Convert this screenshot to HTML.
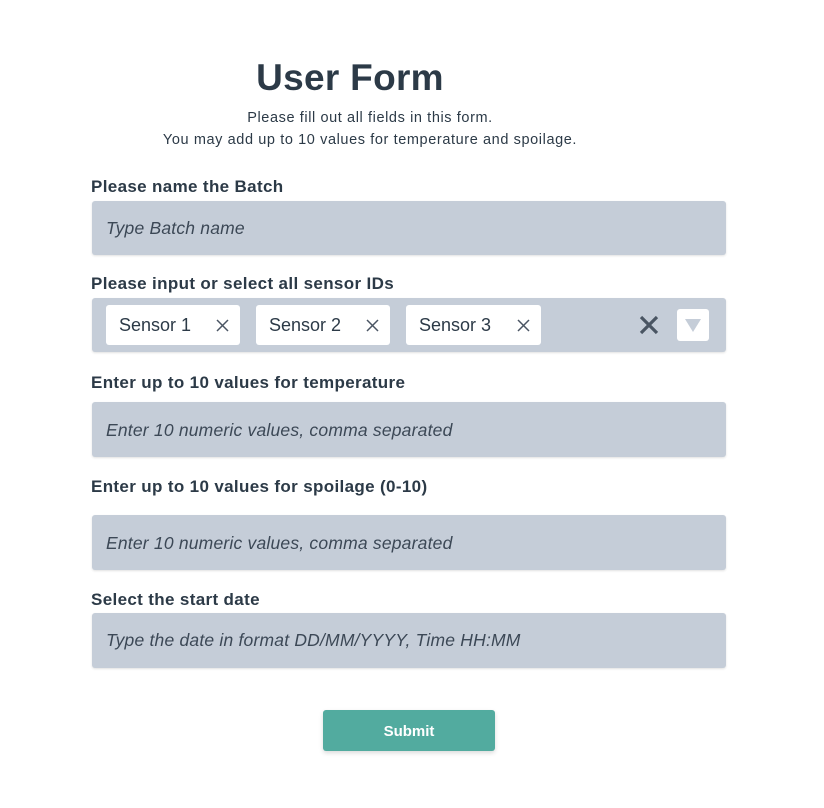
<!DOCTYPE html>
<html><head><style>
body{margin:0;width:824px;height:808px;background:#fff;font-family:"Liberation Sans",sans-serif;color:#2c3a47;position:relative;overflow:hidden}
.a{position:absolute}
.t{left:0;width:700px;text-align:center;top:57px;font-size:37px;font-weight:bold;letter-spacing:0.3px}
.s{left:0;width:740px;text-align:center;font-size:14.5px;letter-spacing:0.6px}
.l{left:91px;font-size:17px;font-weight:bold;letter-spacing:0.35px}
.i{left:92px;width:634px;background:#c5cdd8;border-radius:3px;box-shadow:0 1px 2px rgba(0,0,0,.12)}
.p{position:absolute;left:14px;font-style:italic;font-size:17.5px;color:#3c4856;letter-spacing:0.2px}
.c{top:305px;width:134px;height:40px;background:#fff;border-radius:3px;font-size:18px;line-height:40px;color:#2c3a47}
.c span{position:absolute;left:13px}
.c svg{position:absolute;right:11px;top:14px}
</style></head><body>
<div class="a t">User Form</div>
<div class="a s" style="top:110px">Please fill out all fields in this form.</div>
<div class="a s" style="top:132px">You may add up to 10 values for temperature and spoilage.</div>

<div class="a l" style="top:177px">Please name the Batch</div>
<div class="a i" style="top:201px;height:54px"><div class="p" style="top:17px">Type Batch name</div></div>

<div class="a l" style="top:274px">Please input or select all sensor IDs</div>
<div class="a i" style="top:298px;height:54px"></div>
<div class="a c" style="left:106px"><span>Sensor 1</span><svg width="13" height="13"><path d="M1 1L12 12M12 1L1 12" stroke="#4a5563" stroke-width="1.5"/></svg></div>
<div class="a c" style="left:256px"><span>Sensor 2</span><svg width="13" height="13"><path d="M1 1L12 12M12 1L1 12" stroke="#4a5563" stroke-width="1.5"/></svg></div>
<div class="a c" style="left:406px;width:135px"><span>Sensor 3</span><svg width="13" height="13"><path d="M1 1L12 12M12 1L1 12" stroke="#4a5563" stroke-width="1.5"/></svg></div>
<svg class="a" style="left:639px;top:315px" width="20" height="20"><path d="M2 2L18 18M18 2L2 18" stroke="#4a5563" stroke-width="3.2"/></svg>
<div class="a" style="left:677px;top:309px;width:32px;height:32px;background:#fff;border-radius:3px"></div>
<svg class="a" style="left:685px;top:319px" width="16" height="13"><path d="M0 0H16L8 13Z" fill="#c5cdd8"/></svg>

<div class="a l" style="top:373px">Enter up to 10 values for temperature</div>
<div class="a i" style="top:402px;height:55px"><div class="p" style="top:18px">Enter 10 numeric values, comma separated</div></div>

<div class="a l" style="top:477px">Enter up to 10 values for spoilage (0-10)</div>
<div class="a i" style="top:515px;height:55px"><div class="p" style="top:18px">Enter 10 numeric values, comma separated</div></div>

<div class="a l" style="top:590px">Select the start date</div>
<div class="a i" style="top:613px;height:55px"><div class="p" style="top:17px">Type the date in format DD/MM/YYYY, Time HH:MM</div></div>

<div class="a" style="left:323px;top:710px;width:172px;height:41px;background:#52ab9f;border-radius:3px;box-shadow:0 2px 5px rgba(0,0,0,.15);color:#fff;font-weight:bold;font-size:15px;text-align:center;line-height:43px">Submit</div>
</body></html>
